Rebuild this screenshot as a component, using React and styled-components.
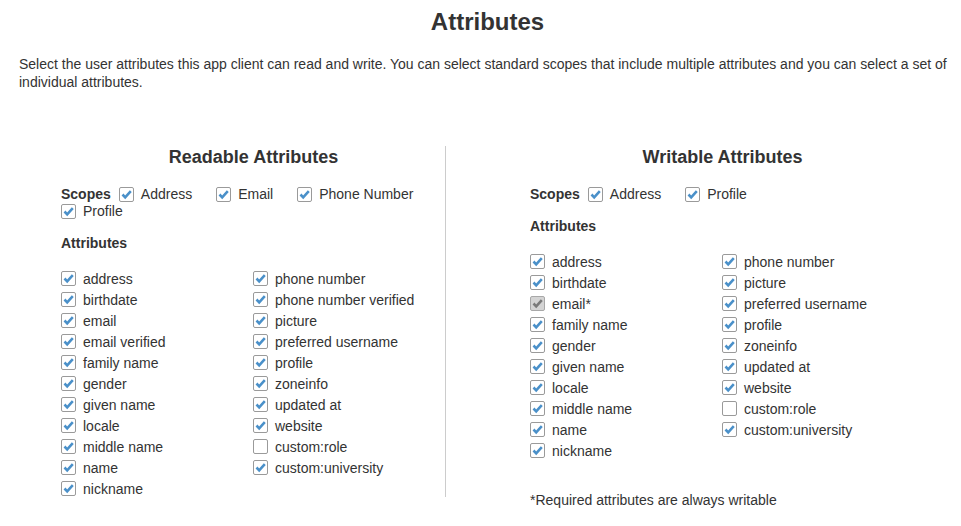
import React from 'react';
import styled, { createGlobalStyle } from 'styled-components';

const GlobalStyle = createGlobalStyle`
  body {
    margin: 0;
    background: #fff;
    font-family: "Liberation Sans", Arial, sans-serif;
    color: #333;
  }
`;

const Page = styled.div`
  width: 961px;
  padding: 8px 5px 0 19px;
  box-sizing: border-box;
`;

const Title = styled.h1`
  font-size: 24px;
  line-height: 28px;
  font-weight: bold;
  text-align: center;
  margin: 0;
  color: #333;
`;

const Intro = styled.p`
  font-size: 14px;
  line-height: 18px;
  margin: 19px 0 0;
`;

const Panels = styled.div`
  display: grid;
  grid-template-columns: 426px 1px 1fr;
  margin: 55px -5px 0 0;
`;

const Divider = styled.div`
  width: 1px;
  height: 351px;
  background: #ccc;
`;

const Panel = styled.section`
  padding-left: ${(p) => p.$indent}px;
  width: 385px;
`;

const PanelTitle = styled.h2`
  font-size: 18px;
  line-height: 22px;
  font-weight: bold;
  text-align: center;
  margin: 0 0 18px;
`;

const ScopeRow = styled.div`
  display: flex;
  flex-wrap: wrap;
  align-items: center;
  font-size: 14px;
  line-height: 17px;
`;

const Label = styled.span`
  font-weight: bold;
  font-size: 14px;
  margin-right: 8px;
`;

const ScopeItem = styled.label`
  display: flex;
  align-items: center;
  height: 17px;
  margin-right: 24px;
`;

const SectionLabel = styled.div`
  font-weight: bold;
  font-size: 14px;
  line-height: 17px;
  margin: 15px 0 16px;
`;

const Columns = styled.div`
  display: flex;
`;

const Column = styled.div`
  width: 192px;
  display: flex;
  flex-direction: column;
`;

const Item = styled.label`
  display: flex;
  align-items: center;
  height: 21px;
  font-size: 14px;
`;

const Box = styled.span`
  width: 13px;
  height: 13px;
  border: 1px solid ${(p) => (p.$disabled ? '#a8a8a8' : '#9a9a9a')};
  border-radius: 2px;
  background: ${(p) => (p.$disabled ? '#d4d4d4' : '#fff')};
  margin-right: 7px;
  display: inline-flex;
  align-items: center;
  justify-content: center;
  flex: none;
`;

const Note = styled.p`
  font-size: 14px;
  line-height: 17px;
  margin: 31px 0 0;
`;

const Check = ({ checked = true, disabled }) => (
  <Box $disabled={disabled}>
    {checked && (
      <svg width="13" height="13" viewBox="0 0 13 13">
        <polyline
          points="2.5,6.5 5.2,9.3 10.8,3.2"
          fill="none"
          stroke={disabled ? '#7a7a7a' : '#4a90c9'}
          strokeWidth="2.6"
          strokeLinejoin="miter"
        />
      </svg>
    )}
  </Box>
);

const Attr = ({ name, checked = true, disabled }) => (
  <Item>
    <Check checked={checked} disabled={disabled} />
    {name}
  </Item>
);

const readLeft = ['address', 'birthdate', 'email', 'email verified', 'family name', 'gender', 'given name', 'locale', 'middle name', 'name', 'nickname'];
const readRight = ['phone number', 'phone number verified', 'picture', 'preferred username', 'profile', 'zoneinfo', 'updated at', 'website', 'custom:role', 'custom:university'];
const writeLeft = ['address', 'birthdate', 'email*', 'family name', 'gender', 'given name', 'locale', 'middle name', 'name', 'nickname'];
const writeRight = ['phone number', 'picture', 'preferred username', 'profile', 'zoneinfo', 'updated at', 'website', 'custom:role', 'custom:university'];

const App = () => (
  <Page>
    <GlobalStyle />
    <Title>Attributes</Title>
    <Intro>
      Select the user attributes this app client can read and write. You can select standard scopes that include multiple attributes and you can select a set of individual attributes.
    </Intro>
    <Panels>
      <Panel $indent={42}>
        <PanelTitle>Readable Attributes</PanelTitle>
        <ScopeRow>
          <Label>Scopes</Label>
          {['Address', 'Email', 'Phone Number', 'Profile'].map((s) => (
            <ScopeItem key={s}>
              <Check />
              {s}
            </ScopeItem>
          ))}
        </ScopeRow>
        <SectionLabel>Attributes</SectionLabel>
        <Columns>
          <Column>
            {readLeft.map((a) => <Attr key={a} name={a} />)}
          </Column>
          <Column>
            {readRight.map((a) => <Attr key={a} name={a} checked={a !== 'custom:role'} />)}
          </Column>
        </Columns>
      </Panel>
      <Divider />
      <Panel $indent={84}>
        <PanelTitle>Writable Attributes</PanelTitle>
        <ScopeRow>
          <Label>Scopes</Label>
          {['Address', 'Profile'].map((s) => (
            <ScopeItem key={s}>
              <Check />
              {s}
            </ScopeItem>
          ))}
        </ScopeRow>
        <SectionLabel>Attributes</SectionLabel>
        <Columns>
          <Column>
            {writeLeft.map((a) => <Attr key={a} name={a} disabled={a === 'email*'} />)}
          </Column>
          <Column>
            {writeRight.map((a) => <Attr key={a} name={a} checked={a !== 'custom:role'} />)}
          </Column>
        </Columns>
        <Note>*Required attributes are always writable</Note>
      </Panel>
    </Panels>
  </Page>
);

export default App;
